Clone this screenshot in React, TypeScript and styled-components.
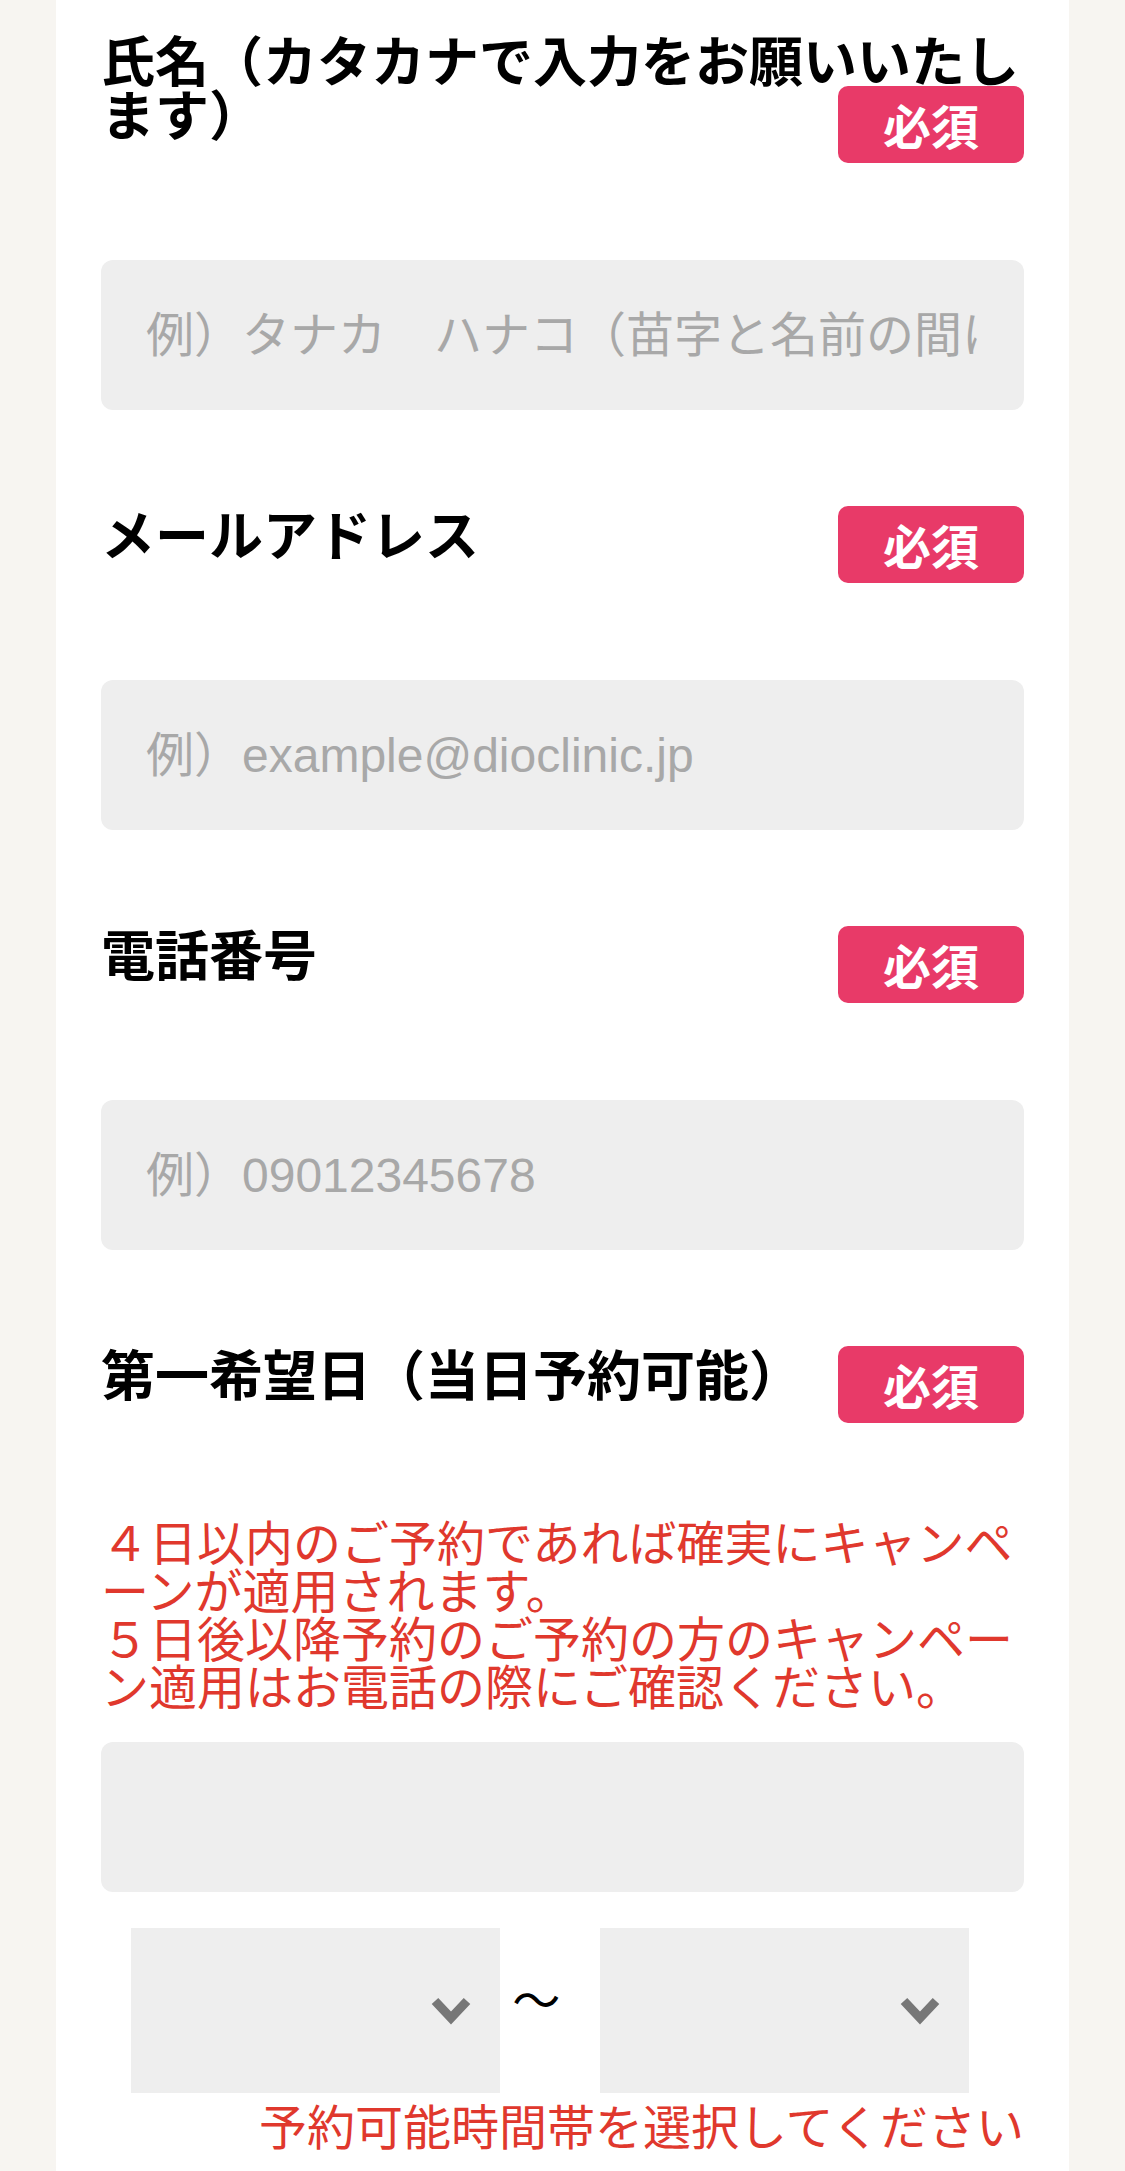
import React from 'react';
import styled, { createGlobalStyle } from 'styled-components';

const GlobalStyle = createGlobalStyle`
  html, body {
    margin: 0;
    padding: 0;
    background: #f7f5f1;
  }
  body {
    font-family: "Noto Sans CJK JP", "Liberation Sans", sans-serif;
  }
  * {
    box-sizing: border-box;
  }
`;

const Page = styled.div`
  width: 1013px;
  min-height: 2171px;
  margin: 0 auto;
  padding: 32px 45px 0;
  background: #fff;
`;

const Field = styled.div`
  & + & {
    margin-top: 96px;
  }
`;

const Label = styled.div`
  display: flow-root;
  font-size: 54px;
  line-height: 54px;
  font-weight: 700;
  color: #000;
`;

const Required = styled.span`
  float: right;
  width: 186px;
  height: 77px;
  border-radius: 10px;
  background: #e83a68;
  color: #fff;
  font-size: 48px;
  line-height: 77px;
  font-weight: 700;
  text-align: center;
`;

const TextInput = styled.input<{ $top?: number }>`
  display: block;
  width: 100%;
  height: 150px;
  margin: ${({ $top = 97 }) => $top}px 0 0;
  padding: 0 47px 0 45px;
  border: none;
  border-radius: 12px;
  background: #eee;
  font-family: "Liberation Sans", "Noto Sans CJK JP", sans-serif;
  font-size: 48px;
  color: #333;
  outline: none;

  &::placeholder {
    color: #a8a8a8;
    opacity: 1;
  }
`;

const Notice = styled.p`
  margin: 93px 0 0;
  color: #e0382d;
  font-size: 48px;
  line-height: 48px;
  line-break: normal;
`;

const TimeRow = styled.div`
  display: flex;
  align-items: flex-start;
  margin-top: 36px;
`;

const SelectWrap = styled.div`
  position: relative;
  flex: 0 0 40%;
  height: 165px;

  &:first-child {
    margin-left: 30px;
  }
`;

const Select = styled.select`
  appearance: none;
  -webkit-appearance: none;
  display: block;
  width: 100%;
  height: 100%;
  padding: 0 80px 0 30px;
  border: none;
  border-radius: 0;
  background: #eee;
  font-family: "Noto Sans CJK JP", sans-serif;
  font-size: 48px;
  color: #000;
  outline: none;
`;

const Chevron = styled.svg`
  position: absolute;
  right: 29px;
  top: 50%;
  transform: translateY(-50%);
  pointer-events: none;
`;

const Tilde = styled.span`
  flex: 0 0 100px;
  margin-top: 45px;
  padding-left: 12px;
  font-size: 48px;
  line-height: 48px;
  color: #000;
`;

const Hint = styled.p`
  margin: 7px 0 0;
  text-align: right;
  color: #e0382d;
  font-size: 48px;
  line-height: 48px;
`;

const ChevronIcon = () => (
  <Chevron width="40" height="28" viewBox="0 0 40 28">
    <polyline points="4,4 20,21 36,4" fill="none" stroke="#777" strokeWidth="9" />
  </Chevron>
);

const TimeSelect = () => (
  <SelectWrap>
    <Select defaultValue="">
      <option value=""></option>
    </Select>
    <ChevronIcon />
  </SelectWrap>
);

const fields = [
  { label: '氏名（カタカナで入力をお願いいたします）', placeholder: '例）タナカ　ハナコ（苗字と名前の間にスペースを入れてください）', type: 'text' },
  { label: 'メールアドレス', placeholder: '例）example@dioclinic.jp', type: 'email' },
  { label: '電話番号', placeholder: '例）09012345678', type: 'tel' },
];

export default function App() {
  return (
    <>
      <GlobalStyle />
      <Page>
        {fields.map((f) => (
          <Field key={f.label}>
            <Label>
              {f.label}
              <Required>必須</Required>
            </Label>
            <TextInput type={f.type} placeholder={f.placeholder} />
          </Field>
        ))}
        <Field>
          <Label>
            第一希望日（当日予約可能）
            <Required>必須</Required>
          </Label>
          <Notice>
            ４日以内のご予約であれば確実にキャンペーンが適用されます。
            <br />
            ５日後以降予約のご予約の方のキャンペーン適用はお電話の際にご確認ください。
          </Notice>
          <TextInput type="text" $top={34} />
          <TimeRow>
            <TimeSelect />
            <Tilde>〜</Tilde>
            <TimeSelect />
          </TimeRow>
          <Hint>予約可能時間帯を選択してください</Hint>
        </Field>
      </Page>
    </>
  );
}
